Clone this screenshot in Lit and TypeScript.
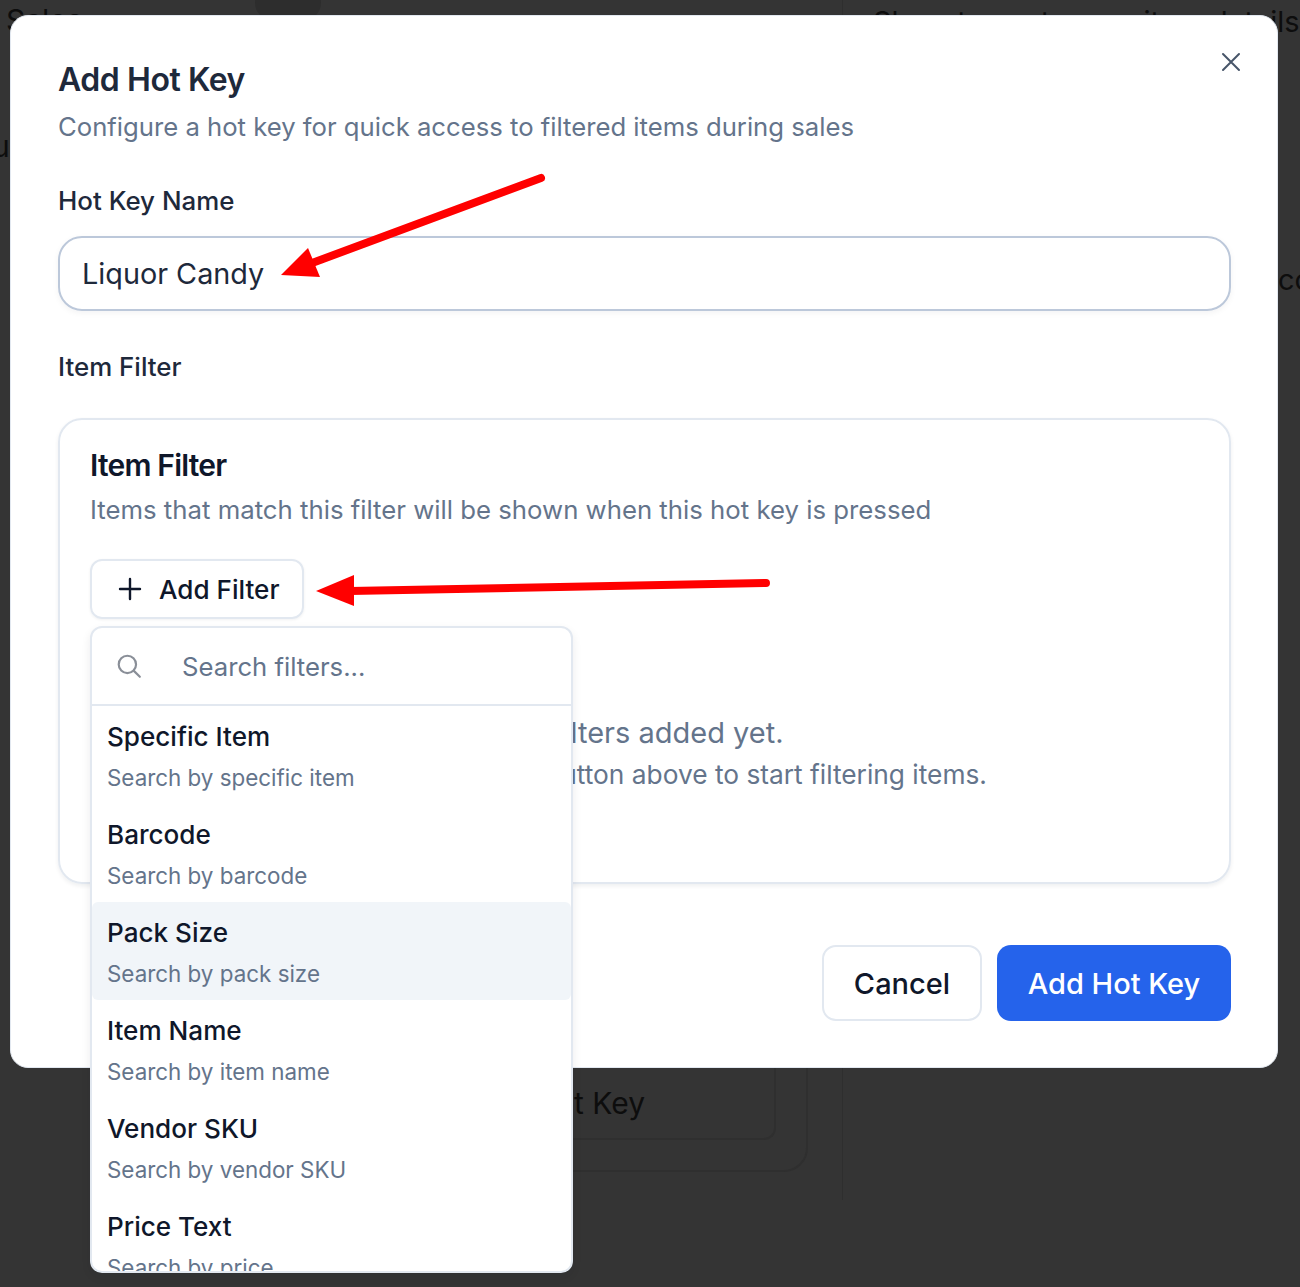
import { LitElement, html, css } from "lit";
import { customElement } from "lit/decorators.js";

const FILTERS = [
  { name: "Specific Item", hint: "Search by specific item" },
  { name: "Barcode", hint: "Search by barcode" },
  { name: "Pack Size", hint: "Search by pack size", active: true },
  { name: "Item Name", hint: "Search by item name" },
  { name: "Vendor SKU", hint: "Search by vendor SKU" },
  { name: "Price Text", hint: "Search by price" },
];

@customElement("app-root")
export class AppRoot extends LitElement {
  static styles = css`
    :host {
      display: block;
      font-family: Inter, "Liberation Sans", sans-serif;
    }

    .page {
      position: relative;
      height: 1287px;
      overflow: hidden;
      background: #343434;
      color: #0d0d0d;
      display: grid;
      grid-template-columns: 843px 1fr;
    }

    /* dimmed page behind the dialog */
    .behind-left {
      height: 1200px;
      border-right: 1px solid #2e2e2e;
      box-sizing: border-box;
      padding: 0 0 0 6px;
    }
    .behind-top {
      display: flex;
      align-items: flex-start;
      height: 130px;
    }
    .behind-title {
      font-size: 30px;
      line-height: 40px;
      width: 249px;
    }
    .behind-toggle {
      width: 66px;
      height: 34px;
      margin-top: -14px;
      border-radius: 17px;
      background: #2d2d2d;
    }
    .behind-cut {
      margin-left: -14px;
      font-size: 30px;
      line-height: 32px;
      height: 32px;
    }
    .behind-card {
      margin: 872px 0 0 300px;
      width: 502px;
      height: 138px;
      box-sizing: border-box;
      border: 2px solid #2f2f2f;
      border-top: 0;
      border-radius: 0 0 24px 0;
      padding-right: 30px;
    }
    .behind-key {
      height: 106px;
      box-sizing: border-box;
      border: 2px solid #2f2f2f;
      border-top: 0;
      border-radius: 0 0 12px 0;
      text-align: right;
      padding: 49px 129px 0 0;
      font-size: 30px;
      line-height: 40px;
    }
    .behind-right {
      padding: 4px 0 0 30px;
      font-size: 28.9px;
      line-height: 36px;
      white-space: nowrap;
    }
    .behind-co {
      margin: 222px 0 0 405px;
    }

    /* dialog */
    .modal {
      position: absolute;
      left: 10px;
      top: 15px;
      width: 1268px;
      height: 1053px;
      box-sizing: border-box;
      background: #fff;
      border: 1px solid #e2e8f0;
      border-radius: 18px;
      padding: 42px 46px 0 47px;
    }
    .close {
      position: absolute;
      left: 1210px;
      top: 36px;
      width: 20px;
      height: 20px;
      color: #475569;
    }
    h2 {
      margin: 0;
      font-size: 32px;
      line-height: 44px;
      font-weight: 600;
      letter-spacing: -0.45px;
      color: #1e293b;
    }
    .desc {
      margin: 7px 0 0;
      font-size: 25.68px;
      line-height: 36px;
      color: #64748b;
    }
    .label {
      font-size: 25.9px;
      line-height: 36px;
      font-weight: 500;
      color: #1e293b;
    }
    .label.first {
      margin-top: 38px;
    }
    .name-input {
      margin-top: 17px;
      height: 75px;
      box-sizing: border-box;
      display: flex;
      align-items: center;
      padding: 0 22px;
      border: 2px solid #bcc8da;
      border-radius: 24px;
      font-size: 28.8px;
      color: #1e293b;
      box-shadow: 0 2px 6px rgba(15, 23, 42, 0.05);
    }
    .label.second {
      margin-top: 38px;
    }

    .filter-card {
      position: relative;
      margin-top: 33px;
      height: 466px;
      box-sizing: border-box;
      border: 2px solid #e2e8f0;
      border-radius: 24px;
      padding: 25px 30px 0;
      box-shadow: 0 2px 4px rgba(15, 23, 42, 0.07);
    }
    h3 {
      margin: 0;
      font-size: 30px;
      line-height: 40px;
      font-weight: 600;
      letter-spacing: -0.8px;
      color: #0f172a;
    }
    .card-desc {
      margin-top: 7px;
      font-size: 25.76px;
      line-height: 36px;
      color: #64748b;
    }
    .add-filter {
      margin-top: 31px;
      width: 214px;
      height: 60px;
      box-sizing: border-box;
      display: flex;
      align-items: center;
      gap: 17px;
      padding-left: 26px;
      border: 2px solid #e2e8f0;
      border-radius: 12px;
      font-size: 26.1px;
      font-weight: 500;
      color: #0f172a;
      box-shadow: 0 1px 3px rgba(15, 23, 42, 0.06);
    }
    .add-filter svg {
      width: 24px;
      height: 24px;
      flex: none;
    }
    .empty {
      margin-top: 94px;
      text-align: center;
      color: #64748b;
    }
    .empty-title {
      font-size: 29px;
      line-height: 40px;
    }
    .empty-hint {
      margin-top: 4px;
      font-size: 26.3px;
      line-height: 36px;
    }

    /* filter menu */
    .menu {
      position: absolute;
      left: 30px;
      top: 206px;
      width: 483px;
      height: 647px;
      box-sizing: border-box;
      overflow: hidden;
      background: #fff;
      border: 2px solid #e2e8f0;
      border-radius: 12px;
      box-shadow: 0 4px 10px rgba(15, 23, 42, 0.08);
    }
    .menu-search {
      height: 78px;
      box-sizing: border-box;
      display: flex;
      align-items: center;
      gap: 40px;
      padding-left: 24px;
      border-bottom: 2px solid #e2e8f0;
      font-size: 25.7px;
      color: #64748b;
    }
    .menu-search svg {
      width: 26px;
      height: 26px;
      flex: none;
      color: #8a8f98;
    }
    .option {
      height: 98px;
      box-sizing: border-box;
      padding: 11px 15px 0;
      border-radius: 6px;
    }
    .option.active {
      background: #f1f5f9;
    }
    .option-name {
      font-size: 26.1px;
      line-height: 40px;
      font-weight: 500;
      color: #0f172a;
    }
    .option-hint {
      margin-top: 3px;
      font-size: 22.4px;
      line-height: 36px;
      color: #64748b;
    }

    .footer {
      display: flex;
      justify-content: flex-end;
      gap: 15px;
      margin: 61px 0 0;
    }
    .btn {
      height: 76px;
      box-sizing: border-box;
      display: flex;
      align-items: center;
      justify-content: center;
      border-radius: 14px;
      font-size: 29px;
      font-weight: 500;
    }
    .btn.cancel {
      width: 160px;
      border: 2px solid #e2e8f0;
      color: #0f172a;
    }
    .btn.primary {
      width: 234px;
      background: #2563eb;
      color: #fff;
    }

    /* red annotation arrows drawn over the screenshot */
    .arrows {
      position: absolute;
      left: 0;
      top: 0;
      width: 1300px;
      height: 1287px;
      pointer-events: none;
    }
  `;

  render() {
    return html`
      <div class="page">
        <div class="behind-left">
          <div class="behind-top">
            <div class="behind-title">Sales</div>
            <div class="behind-toggle"></div>
          </div>
          <div class="behind-cut">u</div>
          <div class="behind-card">
            <div class="behind-key">Add Hot Key</div>
          </div>
        </div>
        <div class="behind-right">
          <div>Show to customers item details</div>
          <div class="behind-co">co</div>
        </div>

        <div class="modal">
          <svg class="close" viewBox="0 0 20 20" fill="none" stroke="currentColor" stroke-width="2" stroke-linecap="round">
            <path d="M2 2l16 16M18 2L2 18" />
          </svg>
          <h2>Add Hot Key</h2>
          <p class="desc">Configure a hot key for quick access to filtered items during sales</p>
          <div class="label first">Hot Key Name</div>
          <div class="name-input">Liquor Candy</div>
          <div class="label second">Item Filter</div>

          <div class="filter-card">
            <h3>Item Filter</h3>
            <div class="card-desc">Items that match this filter will be shown when this hot key is pressed</div>
            <div class="add-filter">
              <svg viewBox="0 0 24 24" fill="none" stroke="currentColor" stroke-width="2.4" stroke-linecap="round">
                <path d="M12 2v20M2 12h20" />
              </svg>
              Add Filter
            </div>
            <div class="empty">
              <div class="empty-title">No filters added yet.</div>
              <div class="empty-hint">Click the Add Filter button above to start filtering items.</div>
            </div>
            <div class="menu">
              <div class="menu-search">
                <svg viewBox="0 0 24 24" fill="none" stroke="currentColor" stroke-width="2" stroke-linecap="round">
                  <circle cx="10.5" cy="10.5" r="8" />
                  <path d="M16.5 16.5L22 22" />
                </svg>
                Search filters...
              </div>
              ${FILTERS.map(
                (f) => html`
                  <div class="option ${f.active ? "active" : ""}">
                    <div class="option-name">${f.name}</div>
                    <div class="option-hint">${f.hint}</div>
                  </div>
                `
              )}
            </div>
          </div>

          <div class="footer">
            <div class="btn cancel">Cancel</div>
            <div class="btn primary">Add Hot Key</div>
          </div>
        </div>

        <svg class="arrows" viewBox="0 0 1300 1287" fill="#ff0000" stroke="#ff0000" stroke-linecap="round">
          <path d="M541 178L304 266" stroke-width="8" fill="none" />
          <path d="M281 275L308 248L320 277Z" stroke="none" />
          <path d="M766 583L350 591" stroke-width="8" fill="none" />
          <path d="M316 591L354 575L354 606Z" stroke="none" />
        </svg>
      </div>
    `;
  }
}
